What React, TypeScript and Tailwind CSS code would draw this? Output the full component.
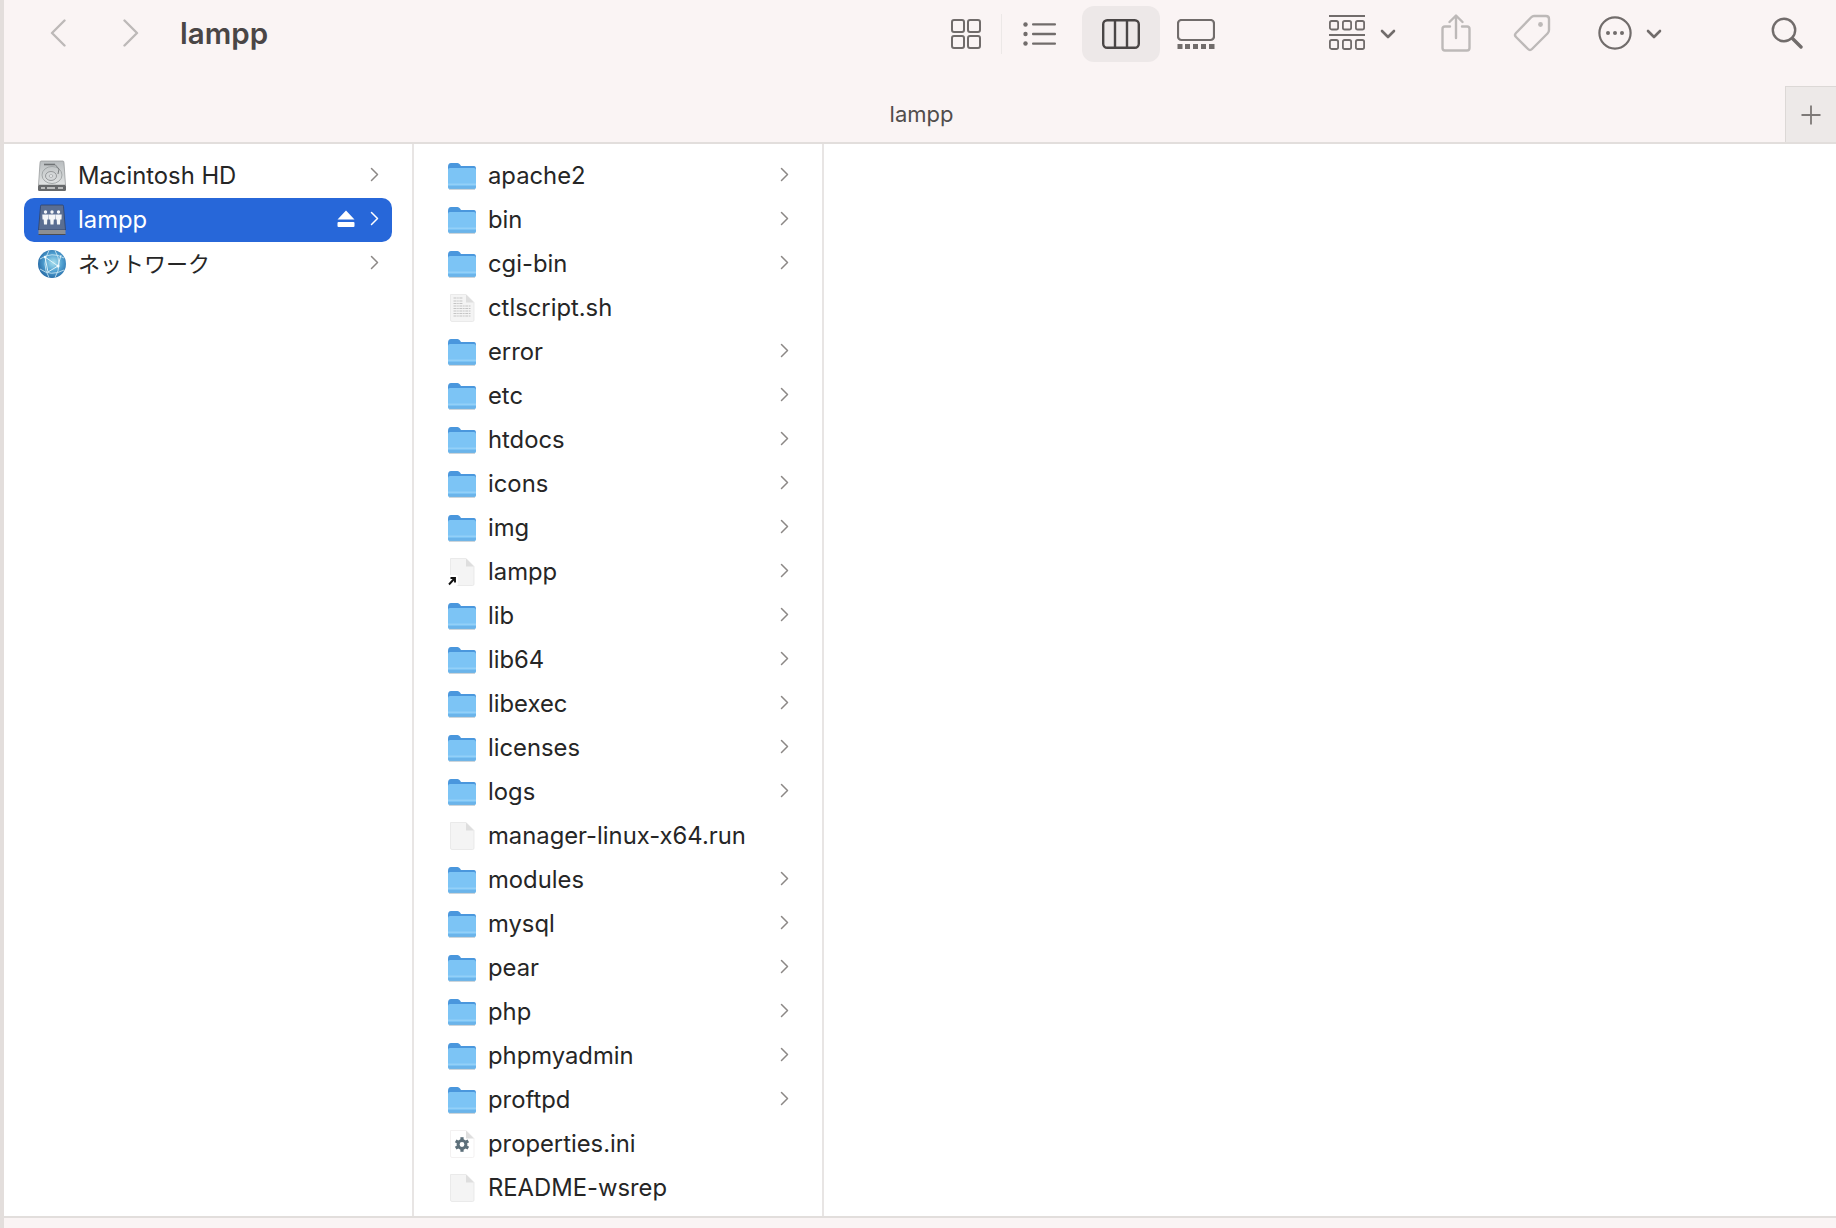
import React from "react";

const FONT = "font-['Inter','Noto_Sans_CJK_JP',sans-serif]";

function Folder() {
  return (
    <svg width="30" height="28" viewBox="0 0 30 28" className="shrink-0">
      <path d="M1 5 Q1 1 4 1 L10.5 1 Q12 1 13 2.5 L14 4 L27 4 Q29 4 29 7 L29 14 L1 14 Z" fill="#4a97dd" />
      <path d="M1 8 Q1 6 3 6 L27 6 Q29 6 29 8 L29 25 Q29 27 27 27 L3 27 Q1 27 1 25 Z" fill="#7cc4f5" />
      <path d="M1 21.5 L29 21.5 L29 23 L1 23 Z" fill="#93d0f8" />
      <path d="M1 24 L29 24 L29 25 Q29 27 27 27 L3 27 Q1 27 1 25 Z" fill="#6bb4ea" />
      <path d="M2 27.4 L28 27.4" stroke="#b9c4cd" strokeWidth="0.8" />
    </svg>
  );
}

function Doc({ kind }: { kind: "plain" | "text" | "link" | "gear" }) {
  return (
    <svg width="30" height="30" viewBox="0 0 30 30" className="shrink-0">
      <path
        d="M3.5 1.5 L19 1.5 L27 9.5 L27 27 Q27 28.5 25.5 28.5 L5 28.5 Q3.5 28.5 3.5 27 Z"
        fill={kind === "gear" ? "#ffffff" : "#f4f4f4"}
        stroke={kind === "gear" ? "#f0eeee" : "#e6e6e6"}
        strokeWidth="0.8"
      />
      <path d="M19 1.5 L19 9.5 L27 9.5 Z" fill="#dedede" />
      {kind === "text" &&
        [5, 8, 10.5, 13, 15.5, 18, 20.5, 23].map((y, i) => (
          <path key={y} d={`M6.5 ${y} L${i < 3 ? 16 : 24} ${y}`} stroke="#c4c4c4" strokeWidth="1.2" strokeDasharray="3 0.7 1.5 0.7" />
        ))}
      {kind === "link" && (
        <g>
          <rect x="0" y="18" width="11" height="11" rx="2" fill="#ffffff" />
          <path d="M2 27.5 L7 22 M3.5 21 L8 21 L8 25.5" stroke="#111111" strokeWidth="1.9" fill="none" />
        </g>
      )}
      {kind === "gear" && (
        <g>
          <circle cx="15" cy="15.5" r="3.9" fill="none" stroke="#5c6f7a" strokeWidth="3" />
          {[0, 60, 120, 180, 240, 300].map((a) => (
            <rect key={a} x="13.4" y="8.2" width="3.2" height="3.2" fill="#5c6f7a" transform={`rotate(${a} 15 15.5)`} />
          ))}
        </g>
      )}
    </svg>
  );
}

function Chevron({ white }: { white?: boolean }) {
  return (
    <svg width="9" height="15" viewBox="0 0 9 15" className="mb-[3px] shrink-0">
      <path d="M1.5 1.5 L7.5 7.5 L1.5 13.5" fill="none" stroke={white ? "#ffffff" : "#8c8886"} strokeWidth="1.5" strokeLinecap="round" strokeLinejoin="round" />
    </svg>
  );
}

function DiskIcon() {
  return (
    <svg width="30" height="32" viewBox="0 0 30 32" className="shrink-0">
      <defs>
        <linearGradient id="hd" x1="0" y1="0" x2="0" y2="1">
          <stop offset="0" stopColor="#b9bdbf" />
          <stop offset="1" stopColor="#e2e4e4" />
        </linearGradient>
      </defs>
      <path d="M4 1 L26 1 Q27 1 27 3 L28.5 25 L1.5 25 L3 3 Q3 1 4 1 Z" fill="url(#hd)" stroke="#8f9294" strokeWidth="0.7" />
      <rect x="1" y="25" width="28" height="6" rx="1.2" fill="#67696b" />
      <path d="M4 28 L8 28 M10 28 L18 28 M21 28 L26 28" stroke="#d8d8d8" strokeWidth="1.6" />
      <ellipse cx="15" cy="15" rx="10" ry="8.5" fill="none" stroke="#9da1a3" strokeWidth="0.9" />
      <ellipse cx="14" cy="16" rx="5.5" ry="4.5" fill="#d4d7d8" stroke="#8e9193" strokeWidth="0.9" />
      <ellipse cx="14" cy="16" rx="1.8" ry="1.4" fill="#eef0f0" stroke="#8e9193" strokeWidth="0.6" />
      <path d="M7 4.5 L18 4.5" stroke="#6f7274" strokeWidth="1.6" />
      <path d="M18 4.5 L22 9 L21 14" fill="none" stroke="#7b7e80" strokeWidth="1" />
    </svg>
  );
}

function Person({ x }: { x: number }) {
  return (
    <g fill="#f4f6f8" transform={`translate(${x} 0)`}>
      <circle cx="3" cy="8" r="1.7" />
      <path d="M-0.2 10.5 L6.2 10.5 L6 15.5 L4.8 15.5 L4.5 20.5 L1.5 20.5 L1.2 15.5 L0 15.5 Z" />
    </g>
  );
}

function ShareDriveIcon() {
  return (
    <svg width="30" height="32" viewBox="0 0 30 32" className="shrink-0">
      <path d="M4.5 1 L25.5 1 Q26.5 1 26.5 2.5 L28.5 26 L1.5 26 L3.5 2.5 Q3.5 1 4.5 1 Z" fill="#5a6e92" stroke="#2f3e5c" strokeWidth="0.7" />
      <path d="M1.5 26 L28.5 26 L28.5 29.5 Q28.5 31 27 31 L3 31 Q1.5 31 1.5 29.5 Z" fill="#8c8f93" />
      <path d="M1.5 30.5 L28.5 30.5" stroke="#4a4c50" strokeWidth="1" />
      <Person x={5.5} />
      <Person x={12} />
      <Person x={18.5} />
    </svg>
  );
}

function GlobeIcon() {
  return (
    <svg width="30" height="30" viewBox="0 0 30 30" className="shrink-0">
      <defs>
        <radialGradient id="gl" cx="0.55" cy="0.45" r="0.65">
          <stop offset="0" stopColor="#a9e0ee" />
          <stop offset="0.5" stopColor="#4f9fd0" />
          <stop offset="1" stopColor="#1c5c9a" />
        </radialGradient>
      </defs>
      <circle cx="15" cy="15" r="14" fill="url(#gl)" />
      <path d="M3 10 Q15 2 27 9 M3 20 Q14 28 27 21 M12 1.5 Q4 15 12 28.5 M18 1.5 Q26 15 18 28.5" fill="none" stroke="#d5eef6" strokeWidth="0.8" />
      <path d="M8 8 L21 17 L11 23 L8 8 M21 17 L24 6" fill="none" stroke="#e8f7fb" strokeWidth="0.9" />
      <circle cx="21" cy="17" r="1.5" fill="#f4fbfd" />
      <circle cx="8" cy="8" r="1.2" fill="#f4fbfd" />
    </svg>
  );
}

function Eject() {
  return (
    <svg width="18" height="17" viewBox="0 0 18 17" className="shrink-0">
      <path d="M9 0.5 L17.5 9.5 L0.5 9.5 Z" fill="#ffffff" strokeLinejoin="round" />
      <rect x="0.5" y="12" width="17" height="5" rx="1" fill="#ffffff" />
    </svg>
  );
}

const GREY = "#716c6b";
const LIGHT = "#bdb9b8";

function ToolChevron() {
  return (
    <svg width="16" height="10" viewBox="0 0 16 10" className="shrink-0">
      <path d="M2 2 L8 8 L14 2" fill="none" stroke={GREY} strokeWidth="2.6" strokeLinecap="round" strokeLinejoin="round" />
    </svg>
  );
}

function Toolbar() {
  return (
    <div className="flex h-[66px] items-center pl-[46px] pr-[33px]">
      <svg width="16" height="28" viewBox="0 0 16 28" className="shrink-0">
        <path d="M14.5 1.5 L2 14 L14.5 26.5" fill="none" stroke={LIGHT} strokeWidth="2.4" strokeLinecap="round" strokeLinejoin="round" />
      </svg>
      <svg width="16" height="28" viewBox="0 0 16 28" className="ml-[57px] shrink-0">
        <path d="M1.5 1.5 L14 14 L1.5 26.5" fill="none" stroke={LIGHT} strokeWidth="2.4" strokeLinecap="round" strokeLinejoin="round" />
      </svg>
      <div className="ml-[41px] text-[29.5px] font-semibold text-[#4a4646]">lampp</div>
      <div className="flex-1" />
      <svg width="30" height="30" viewBox="0 0 30 30" className="mt-[1px] shrink-0" fill="none" stroke={GREY} strokeWidth="2">
        <rect x="1" y="1" width="12" height="12" rx="2" />
        <rect x="17" y="1" width="12" height="12" rx="2" />
        <rect x="1" y="17" width="12" height="12" rx="2" />
        <rect x="17" y="17" width="12" height="12" rx="2" />
      </svg>
      <div className="ml-[20px] mt-[1px] h-[40px] w-[1px] bg-[#ece8e7]" />
      <svg width="33" height="24" viewBox="0 0 33 24" className="ml-[21px] mt-[1px] shrink-0">
        <g fill={GREY}>
          <circle cx="2.5" cy="2.5" r="2.2" />
          <circle cx="2.5" cy="12" r="2.2" />
          <circle cx="2.5" cy="21.5" r="2.2" />
          <rect x="9" y="1.2" width="24" height="2.4" rx="1" />
          <rect x="9" y="10.8" width="24" height="2.4" rx="1" />
          <rect x="9" y="20.4" width="24" height="2.4" rx="1" />
        </g>
      </svg>
      <div className="ml-[26px] mt-[2px] flex h-[56px] w-[78px] items-center justify-center rounded-[12px] bg-[#ede8e8]">
        <svg width="38" height="30" viewBox="0 0 38 30" fill="none" stroke="#4a4646" strokeWidth="2.4">
          <rect x="1.2" y="1.2" width="35.6" height="27.6" rx="4" />
          <path d="M13 1.2 L13 28.8 M25 1.2 L25 28.8" />
        </svg>
      </div>
      <svg width="38" height="30" viewBox="0 0 38 30" className="ml-[17px] mt-[1px] shrink-0">
        <rect x="1" y="1" width="36" height="20" rx="3.5" fill="none" stroke={GREY} strokeWidth="2.2" />
        <g fill={GREY}>
          <rect x="0.5" y="25" width="5" height="5" />
          <rect x="8" y="25" width="5" height="5" />
          <rect x="16" y="25" width="5" height="5" />
          <rect x="24" y="25" width="5" height="5" />
          <rect x="32" y="25" width="5.5" height="5" />
        </g>
      </svg>
      <svg width="36" height="36" viewBox="0 0 36 36" className="ml-[114px] shrink-0">
        <rect x="0" y="0" width="36" height="2" fill={GREY} />
        <rect x="0" y="19" width="36" height="2" fill={GREY} />
        <g fill="none" stroke={GREY} strokeWidth="1.8">
          {[0.9, 13.9, 26.9].map((x) => (
            <React.Fragment key={x}>
              <rect x={x} y="6" width="8.2" height="8.5" rx="1.8" />
              <rect x={x} y="25" width="8.2" height="9" rx="1.8" />
            </React.Fragment>
          ))}
        </g>
      </svg>
      <div className="ml-[15px] mt-[1px] shrink-0"><ToolChevron /></div>
      <svg width="30" height="38" viewBox="0 0 30 38" className="ml-[45px] shrink-0" fill="none" stroke={LIGHT} strokeWidth="2.4" strokeLinecap="round" strokeLinejoin="round">
        <path d="M9 12.5 L4 12.5 Q1.5 12.5 1.5 15 L1.5 34 Q1.5 36.5 4 36.5 L26 36.5 Q28.5 36.5 28.5 34 L28.5 15 Q28.5 12.5 26 12.5 L21 12.5" />
        <path d="M15 24 L15 2 M8.5 8 L15 1.5 L21.5 8" />
      </svg>
      <svg width="38" height="38" viewBox="0 0 38 38" className="ml-[42px] shrink-0">
        <path d="M21 2 L33 2 Q36 2 36 5 L36 16 Q36 18 34.5 19.5 L19 35 Q17 37 15 35 L3 23 Q1 21 3 19 L18 3.5 Q19.5 2 21 2 Z" fill="none" stroke={LIGHT} strokeWidth="2.4" strokeLinejoin="round" />
        <circle cx="27.5" cy="10.5" r="2.4" fill={LIGHT} />
      </svg>
      <svg width="34" height="34" viewBox="0 0 34 34" className="ml-[47px] shrink-0">
        <circle cx="17" cy="17" r="15.6" fill="none" stroke={GREY} strokeWidth="2.2" />
        <g fill={GREY}>
          <circle cx="10" cy="17" r="2" />
          <circle cx="17" cy="17" r="2" />
          <circle cx="24" cy="17" r="2" />
        </g>
      </svg>
      <div className="ml-[14px] mt-[1px] shrink-0"><ToolChevron /></div>
      <svg width="32" height="32" viewBox="0 0 32 32" className="ml-[109px] shrink-0" fill="none" stroke={GREY} strokeLinecap="round">
        <circle cx="13" cy="13" r="11.2" strokeWidth="2.4" />
        <path d="M21.5 21.5 L30 30" strokeWidth="3.4" />
      </svg>
    </div>
  );
}

function TabBar() {
  return (
    <div className="flex h-[78px] items-end border-b-2 border-[#e2dedc]">
      <div className="flex h-[56px] flex-1 items-center justify-center pl-[54px] text-[22px] text-[#514d4c]">lampp</div>
      <div className="flex h-[56px] w-[51px] items-center justify-center border-l border-t border-[#dcd8d6] bg-[#ede9e8]">
        <svg width="22" height="22" viewBox="0 0 22 22">
          <path d="M11 1.5 L11 20.5 M1.5 11 L20.5 11" stroke="#7d7977" strokeWidth="1.8" />
        </svg>
      </div>
    </div>
  );
}

type Item = { name: string; icon?: "text" | "plain" | "link" | "gear"; chevron?: boolean };

const ITEMS: Item[] = [
  { name: "apache2" },
  { name: "bin" },
  { name: "cgi-bin" },
  { name: "ctlscript.sh", icon: "text", chevron: false },
  { name: "error" },
  { name: "etc" },
  { name: "htdocs" },
  { name: "icons" },
  { name: "img" },
  { name: "lampp", icon: "link", chevron: true },
  { name: "lib" },
  { name: "lib64" },
  { name: "libexec" },
  { name: "licenses" },
  { name: "logs" },
  { name: "manager-linux-x64.run", icon: "plain", chevron: false },
  { name: "modules" },
  { name: "mysql" },
  { name: "pear" },
  { name: "php" },
  { name: "phpmyadmin" },
  { name: "proftpd" },
  { name: "properties.ini", icon: "gear", chevron: false },
  { name: "README-wsrep", icon: "plain", chevron: false },
];

function SideRow({ icon, label, active, small }: { icon: React.ReactNode; label: string; active?: boolean; small?: boolean }) {
  return (
    <div className={`flex h-[44px] items-center rounded-[10px] pl-[13px] pr-[13px] ${active ? "bg-[#2767d9] text-white" : "text-[#262626]"}`}>
      <div className="flex w-[30px] justify-center">{icon}</div>
      <div className={`ml-[11px] flex-1 ${small ? "text-[22px]" : "text-[23.8px]"}`}>{label}</div>
      {active && <div className="mb-[3px] mr-[15px]"><Eject /></div>}
      <Chevron white={active} />
    </div>
  );
}

export default function App() {
  return (
    <div className={`flex h-[1228px] w-[1836px] flex-col overflow-hidden border-l-[4px] border-[#e3dedc] bg-white ${FONT}`}>
      <div className="flex shrink-0 flex-col bg-[#faf4f4]">
        <Toolbar />
        <TabBar />
      </div>
      <div className="flex min-h-0 flex-1">
        <div className="flex w-[410px] shrink-0 flex-col border-r-2 border-[#e8e5e4] pl-[20px] pr-[20px] pt-[10px]">
          <SideRow icon={<DiskIcon />} label="Macintosh HD" />
          <SideRow icon={<ShareDriveIcon />} label="lampp" active />
          <SideRow icon={<GlobeIcon />} label="ネットワーク" small />
        </div>
        <div className="flex w-[410px] shrink-0 flex-col border-r-2 border-[#e8e5e4] pl-[33px] pr-[33px] pt-[10px]">
          {ITEMS.map((it) => (
            <div key={it.name} className="flex h-[44px] shrink-0 items-center">
              <div className="flex w-[30px] justify-center">
                {it.icon ? <Doc kind={it.icon} /> : <Folder />}
              </div>
              <div className="ml-[11px] flex-1 text-[23.8px] text-[#262626]">{it.name}</div>
              {it.chevron !== false && <Chevron />}
            </div>
          ))}
        </div>
        <div className="flex-1" />
      </div>
      <div className="h-[12px] shrink-0 border-t-2 border-[#e2dedc] bg-[#faf4f4]" />
    </div>
  );
}
